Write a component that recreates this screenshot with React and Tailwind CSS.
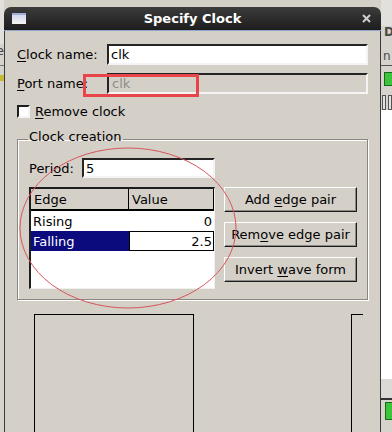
import React from 'react';

const sunken = 'border-2 border-t-[#242424] border-l-[#242424] border-b-[#f4f4f4] border-r-[#f4f4f4]';

const TkButton = ({ children }) => (
  <div className={`h-[25px] flex items-center justify-center bg-[#d4d0c8] border border-t-white border-l-white border-b-[#1c1c1c] border-r-[#1c1c1c] shadow-[inset_-1px_-1px_0_#8c8a86]`}>
    <span className="whitespace-pre">{children}</span>
  </div>
);

const U = ({ children }) => <span className="underline underline-offset-[2px]">{children}</span>;

export default function App() {
  return (
    <div className="relative w-[392px] h-[432px] overflow-hidden bg-[#d4d0c8] flex font-['DejaVu_Sans',sans-serif] text-[13px] leading-none text-black">
      {/* desktop, left edge */}
      <div className="w-[4px] shrink-0 flex flex-col bg-[#d6d3cc] overflow-hidden">
        <div className="h-[44px] bg-[#e2e0dc]" />
        <div className="h-[14px] text-[#444] whitespace-nowrap flex justify-end">e</div>
        <div className="h-[8px] border-b border-[#777]" />
        <div className="mt-[9px] h-[6px] bg-[#c8b83a]" />
        <div className="flex-1" />
      </div>

      {/* dialog window */}
      <div className="w-[377px] shrink-0 mt-[7px] flex flex-col">
        <div className="h-[24px] rounded-t-[7px] bg-linear-to-b from-[#3c3c3c] to-[#1d1d1d] border-b border-[#8ea6c8] grid grid-cols-[1fr_auto_1fr] items-center">
          <div className="pl-[8px] flex items-center">
            <div className="w-[14px] h-[11px] bg-linear-to-b from-[#d0d8ee] to-[#f6f6f2] border-t-2 border-[#9fb0d8]" />
          </div>
          <div className="text-white font-bold text-[13px]">Specify Clock</div>
          <div className="flex justify-end pr-[10px]">
            <svg width="9" height="9" viewBox="0 0 9 9">
              <path d="M1 1 L8 8 M8 1 L1 8" stroke="#cfcfcf" strokeWidth="2" />
            </svg>
          </div>
        </div>

        <div className="flex-1 bg-[#d4d0c8] border-l border-r border-[#3a3a3a] px-[12px] pt-[13px] flex flex-col">
          <div className="flex items-center h-[21px]">
            <div className="w-[90px]"><U>C</U>lock name:</div>
            <div className={`flex-1 h-[21px] bg-white ${sunken} px-[2px] flex items-center`}>clk</div>
          </div>

          <div className="flex items-center h-[21px] mt-[8px]">
            <div className="w-[90px]"><U>P</U>ort name:</div>
            <div className={`flex-1 h-[21px] bg-[#d4d0c8] ${sunken} px-[3px] flex items-center text-[#8e8c88]`}>clk</div>
          </div>

          <div className="flex items-center h-[16px] mt-[9px]">
            <div className="w-[13px] h-[13px] bg-white border-2 border-t-[#1e1e1e] border-l-[#1e1e1e] border-b-[#f4f4f4] border-r-[#f4f4f4]" />
            <div className="ml-[5px]"><U>R</U>emove clock</div>
          </div>

          <fieldset className="mt-[10px] border border-[#8a8782] shadow-[inset_1px_1px_0_#ffffff,1px_1px_0_#ffffff] pl-[11px] pr-[10px] pt-[8px] pb-[10px]">
            <legend className="leading-[16px] pb-[5px] px-[1px] -ml-[1px]">Clock creation</legend>

            <div className="flex items-center h-[20px]">
              <div className="w-[53px]">Peri<U>o</U>d:</div>
              <div className={`w-[133px] h-[20px] bg-white ${sunken} px-[2px] flex items-center`}>5</div>
            </div>

            <div className="flex mt-[9px]">
              <div className="w-[186px] h-[102px] bg-white border-t-2 border-l-2 border-[#1e1e1e] border-r border-b border-r-[#f0f0f0] border-b-[#f0f0f0] flex flex-col">
                <div className="flex h-[22px] bg-[#d4d0c8] border-b-2 border-black">
                  <div className="w-[98px] border-r border-black pl-[3px] flex items-center">Edge</div>
                  <div className="flex-1 border-r border-black pl-[3px] flex items-center">Value</div>
                </div>
                <div className="flex h-[20px]">
                  <div className="w-[98px] pl-[2px] flex items-center">Rising</div>
                  <div className="flex-1 pr-[2px] flex items-center justify-end">0</div>
                </div>
                <div className="flex h-[20px]">
                  <div className="w-[98px] pl-[2px] flex items-center bg-[#0b0b7e] text-white">Falling</div>
                  <div className="flex-1 border border-black pr-[1px] flex items-center justify-end">2.5</div>
                </div>
              </div>

              <div className="ml-[9px] w-[133px] flex flex-col gap-[10px]">
                <TkButton>Add <U>e</U>dge pair</TkButton>
                <TkButton>Rem<U>o</U>ve edge pair</TkButton>
                <TkButton>Invert <U>w</U>ave form</TkButton>
              </div>
            </div>
          </fieldset>

          <div className="flex-1 flex mt-[14px]">
            <div className="ml-[17px] w-[160px] border-l border-t border-r border-black" />
            <div className="ml-[157px] w-[12px] border-l border-t border-black" />
          </div>
        </div>
      </div>

      {/* desktop, right edge */}
      <div className="flex-1 flex flex-col bg-[#d6d3cc] overflow-hidden text-[#4a4a4a]">
        <div className="h-[26px] bg-[#e2e0dc]" />
        <div className="h-[14px] pl-[3px] font-bold text-[12px]">D</div>
        <div className="h-[10px]" />
        <div className="h-[14px] pl-[2px] text-[12px]">n</div>
        <div className="h-[2px] border-b border-[#555]" />
        <div className="mt-[6px] ml-[3px] w-[10px] h-[14px] bg-[#3cc43c] border border-[#1a6a1a]" />
        <div className="mt-[9px] h-[15px] flex gap-[2px] pl-[1px]">
          <div className="w-[5px] border border-[#555] bg-[#e4e2de]" />
          <div className="w-[6px] border border-[#555] bg-[#e4e2de]" />
        </div>
        <div className="h-[269px] bg-white" />
        <div className="h-[19px] bg-[#dcdad6]" />
        <div className="h-[2px] bg-[#333]" />
        <div className="mt-[2px] ml-[4px] w-[8px] h-[18px] bg-[#3cc43c] border border-[#1a6a1a]" />
        <div className="flex-1" />
      </div>

      {/* annotations drawn over the dialog */}
      <svg className="absolute left-0 top-0 pointer-events-none" width="392" height="432">
        <ellipse cx="128" cy="228" rx="108" ry="80" fill="none" stroke="#d8555a" strokeWidth="1" />
      </svg>
      <div className="absolute left-[83px] top-[74px] w-[116px] h-[23px] border-[3px] border-[#e8454a] pointer-events-none" />
    </div>
  );
}
